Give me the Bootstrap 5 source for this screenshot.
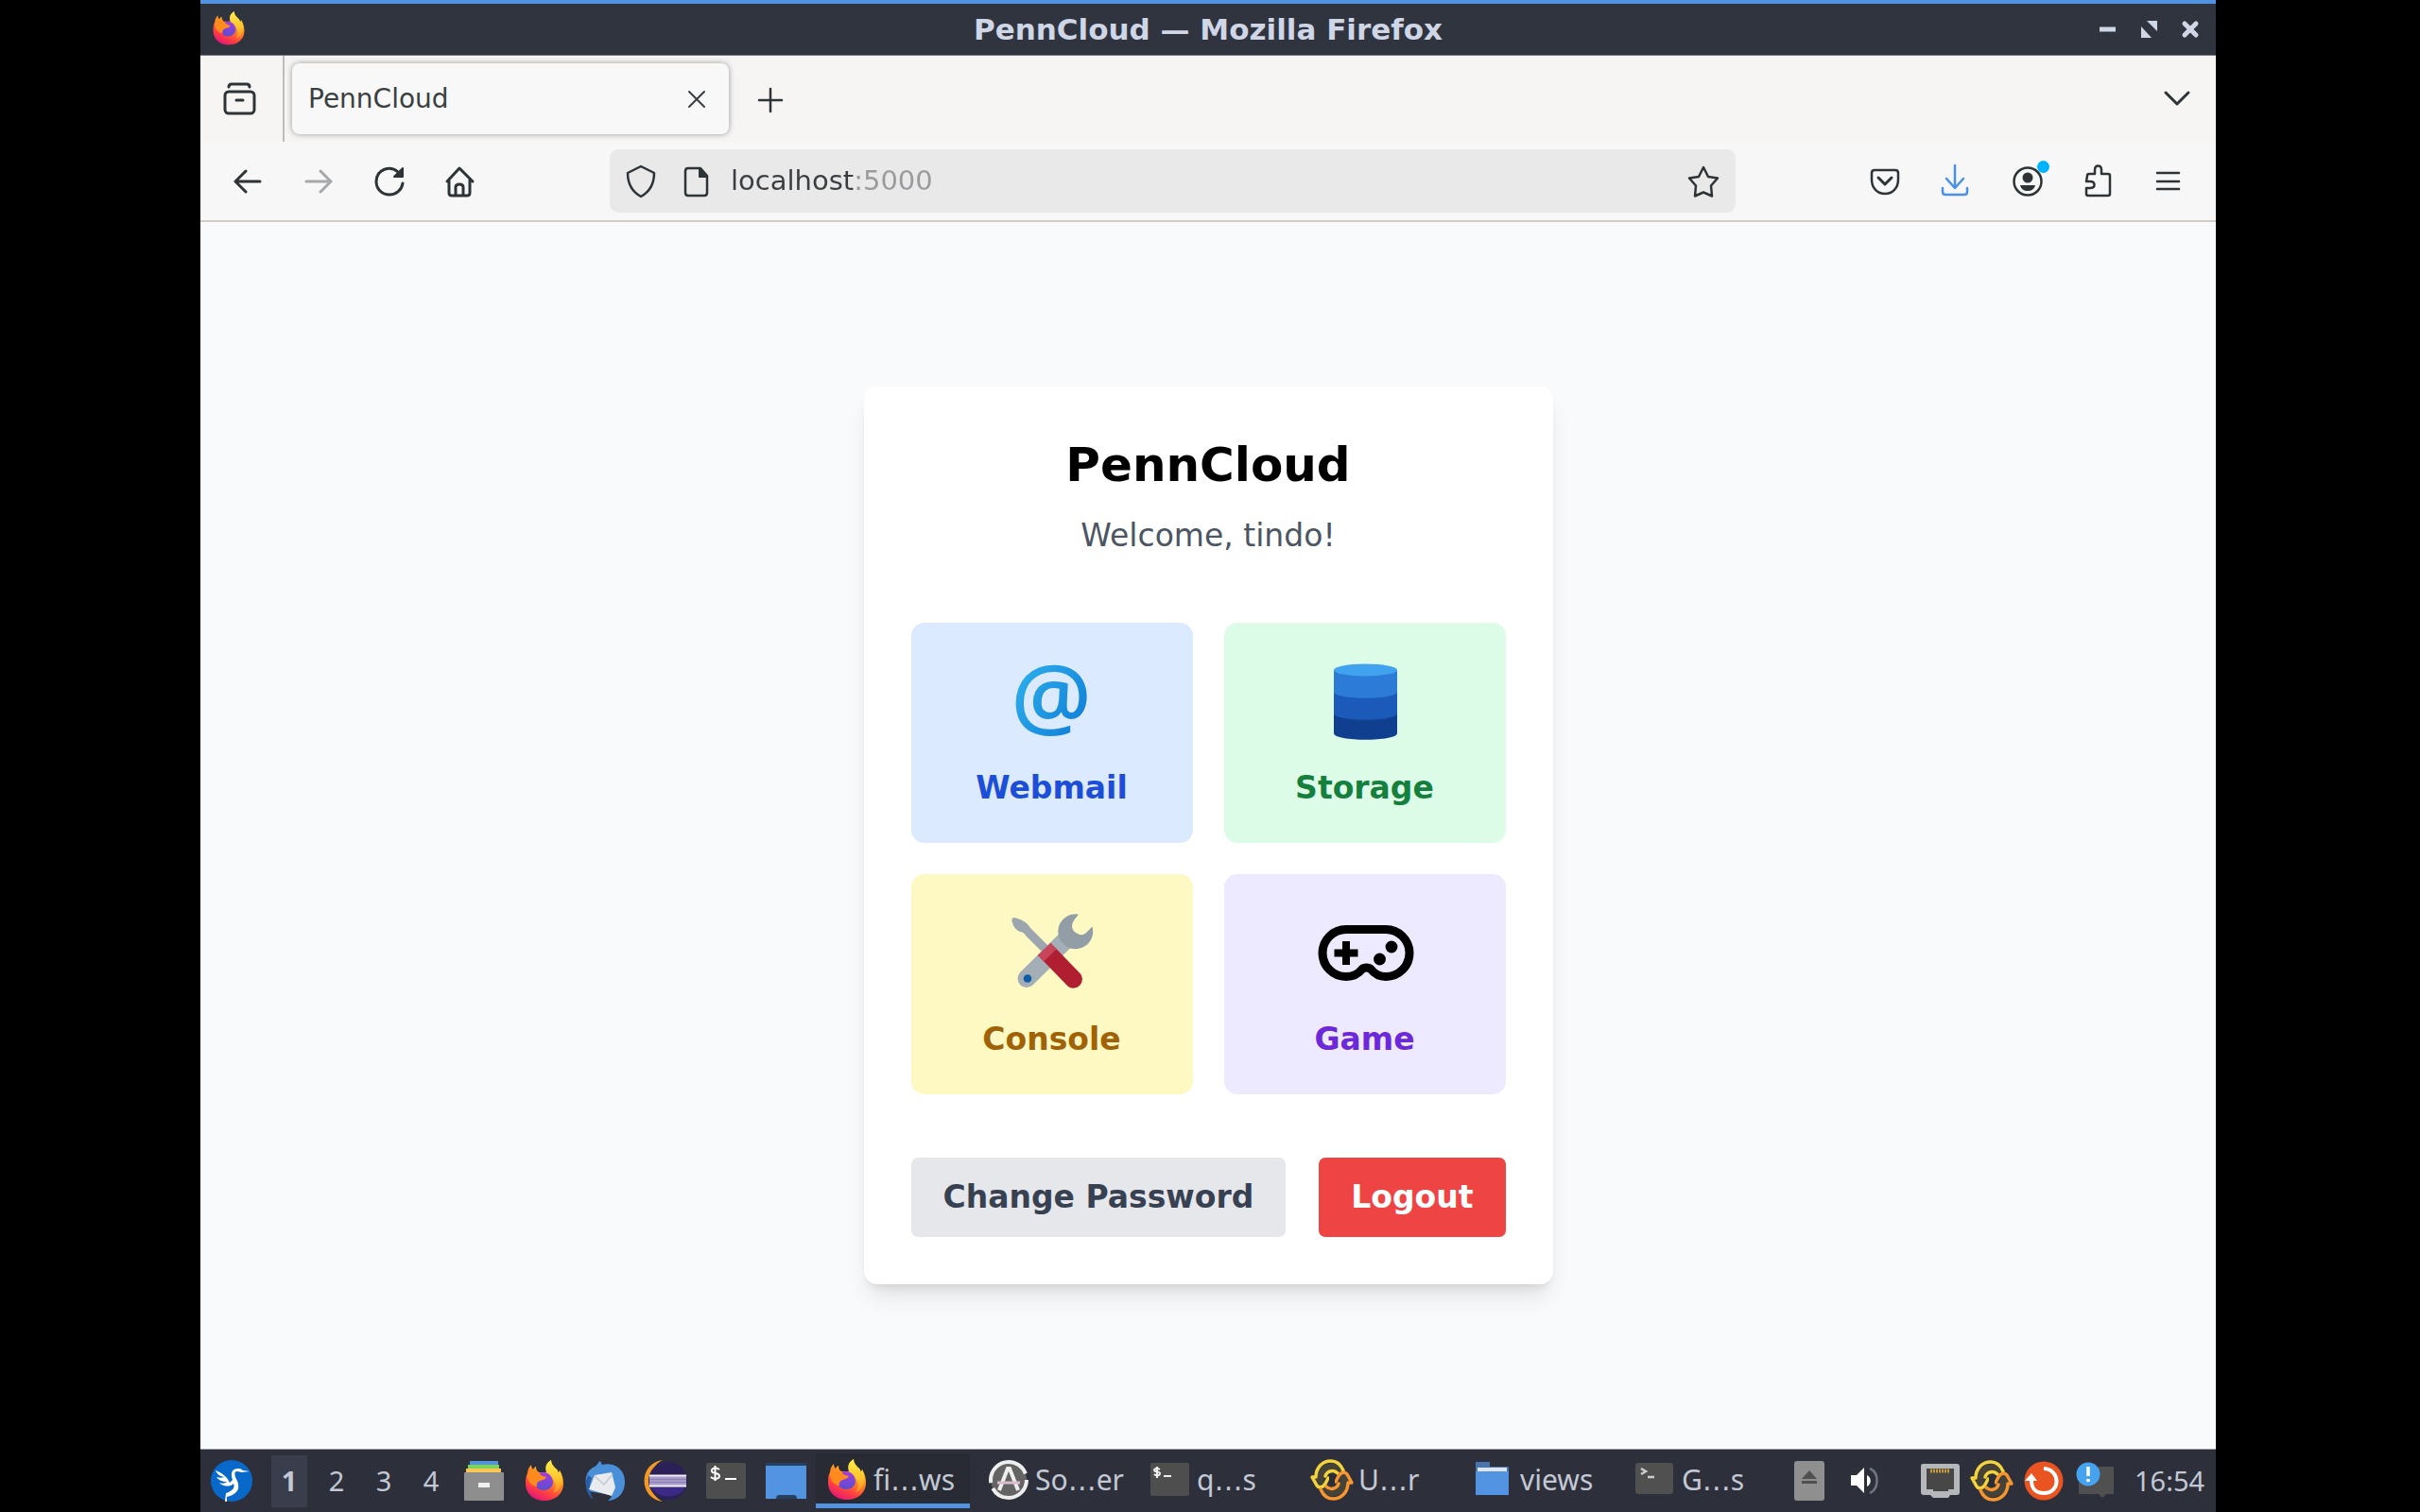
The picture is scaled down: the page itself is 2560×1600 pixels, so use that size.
<!DOCTYPE html>
<html lang="en">
<head>
<meta charset="utf-8">
<meta name="viewport" content="width=device-width, initial-scale=1">
<title>PennCloud</title>
<link rel="stylesheet" href="https://cdn.jsdelivr.net/npm/bootstrap@5.3.0/dist/css/bootstrap.min.css">
<style>
  body { background: #000; font-family: "DejaVu Sans", sans-serif; color: #2e3436; }
  .desktop { min-height: 100vh; margin: 0 216px 0 212px; }
  .ico { display: block; flex: none; width: 40px; height: 40px; fill: none; stroke: currentColor; stroke-width: 3; stroke-linecap: round; stroke-linejoin: round; }
  .plain { background: none; border: 0; padding: 0; color: inherit; display: block; flex: none; }

  /* window title bar */
  .titlebar { height: 59px; padding: 0 7px 0 7px; background: #2f343f; border-top: 4px solid #5294e2; border-bottom: 1px solid #77777b; color: #cfd6e6; }
  .titlebar h1 { font-size: 31px; line-height: 40px; font-weight: 700; }
  .title-side { width: 130px; }

  /* tab strip */
  .tabstrip { height: 91px; background: #f6f5f4; padding-right: 22px; }
  .tab-view { width: 89px; border-right: 2px solid #bfbdbb; padding-left: 21px; }
  .tab-item { width: 462px; height: 75px; margin-left: 8px; padding: 0 14px 0 17px; border-radius: 8px; background: #f8f8f8; box-shadow: 0 0 6px rgba(0,0,0,.38); font-size: 28px; color: #3a3f41; }

  /* navigation bar */
  .navstrip { height: 85px; padding: 0 30px; background: #f7f7f8; border-bottom: 2px solid #d4cac6; }
  .tool-group { gap: 35px; }
  .urlbox { margin: 0 138px; height: 67px; padding: 0 14px; border-radius: 9px; background: #e9e9ea; gap: 17px; }
  .urlbox input { border: 0; outline: 0; padding: 0; font-size: 29px; color: #2e3436; background: linear-gradient(90deg, #3a3e40 130px, #989a9b 130px); -webkit-background-clip: text; background-clip: text; -webkit-text-fill-color: transparent; }
  .dimmed { opacity: .4; }
  .dl { color: #4a90e8; }
  .notice-dot { position: absolute; top: -2px; right: -4px; width: 13px; height: 13px; border-radius: 50%; background: #00b3ff; }

  /* page */
  .viewport { background: #f9fafc; }
  .panel { width: 729px; padding: 50px; border-radius: 14px; background: #fff; box-shadow: 0 17px 25px -5px rgba(0,0,0,.1), 0 7px 10px -5px rgba(0,0,0,.1); }
  .panel h2 { font-size: 50px; line-height: 66px; font-weight: 700; color: #000; margin-bottom: 17px; }
  .panel p { font-size: 33px; line-height: 50px; color: #4b5563; margin-bottom: 67px; }
  .tiles { display: grid; grid-template-columns: 1fr 1fr; gap: 33px; margin-bottom: 67px; }
  .tile { padding: 33px; border-radius: 14px; font-size: 33px; line-height: 50px; font-weight: 700; text-decoration: none; }
  .tile svg { display: block; overflow: visible; width: 104px; height: 100px; margin: 0 auto 17px; }
  .tile-blue { background: #dbeafe; color: #1d4ed8; }
  .tile-green { background: #dcfce7; color: #15803d; }
  .tile-yellow { background: #fef9c3; color: #a16207; }
  .tile-violet { background: #ede9fe; color: #6d28d9; }
  .action { border: 0; border-radius: 7px; padding: 17px 34px; font-size: 33px; line-height: 50px; font-weight: 700; }
  .action-grey, .action-grey:hover { background: #e5e7eb; color: #374151; }
  .action-red, .action-red:hover { background: #ef4444; color: #fff; }

  /* desktop panel */
  .taskbar { height: 67px; padding: 0 6px 0 10px; background: #2d303b; border-top: 1px solid #a0a2a8; color: #c3c8d5; font-family: "Noto Sans", sans-serif; font-size: 30px; line-height: 40px; }
  .pic { display: block; flex: none; width: 46px; height: 46px; }
  .spaces { gap: 12px; margin: 0 14px 0 19px; }
  .space-btn { width: 38px; height: 55px; text-align: center; font-size: 29px; }
  .space-btn.current { background: #3a3d4b; font-weight: 700; }
  .launchers { gap: 18px; margin-right: 8px; }
  .tasks { gap: 8px; }
  .task { width: 163px; height: 58px; padding: 3px 0 0 10px; gap: 5px; border-bottom: 5px solid transparent !important; }
  .task.current { background: #282b34; border-color: #5294e2 !important; }
  .dots { font-family: "DejaVu Sans", sans-serif; }
  .tray { gap: 9px; }
  .clock { width: 80px; margin-left: 9px; font-size: 29px; }
</style>
</head>
<body>
<svg width="0" height="0" class="position-absolute" aria-hidden="true">
  <defs>
    <linearGradient id="ffBody" x1=".8" y1="0" x2=".3" y2="1"><stop offset="0" stop-color="#ffe23a"/><stop offset=".4" stop-color="#ff9a1f"/><stop offset=".75" stop-color="#ff4040"/><stop offset="1" stop-color="#e3157b"/></linearGradient>
    <linearGradient id="ffFlame" x1="0" y1="0" x2="0" y2="1"><stop offset="0" stop-color="#fff04a"/><stop offset=".6" stop-color="#ffc02b"/><stop offset="1" stop-color="#ff8a26"/></linearGradient>
    <linearGradient id="ffCore" x1="0" y1="0" x2="0" y2="1"><stop offset="0" stop-color="#a63ae0"/><stop offset="1" stop-color="#5a4fd0"/></linearGradient>
    <symbol id="firefox" viewBox="0 0 46 46">
      <path fill="url(#ffBody)" d="M5 15C5 11 7 8 9 6c0 3 1 4 2 5 1-2 2-3 3-3 0 3 1 5 3 6h9c-2-6 0-10 4-13 0 5 3 7 6 10 1 1 1 2 2 4l1-3c3 5 4 9 4 14 0 11-9 18-20 18S3 37 3 26c0-4 0-8 2-11z"/>
      <path fill="url(#ffFlame)" d="M25 14c-2-6 0-10 5-13 0 5 3 7 6 10 1 1 1 2 2 4l1-3c6 13 0 22-7 24 5-6 3-15-7-22z"/>
      <path fill="url(#ffCore)" d="M17 15c6-3 14 0 15 9 0 6-5 9-10 9-6 0-9-4-8-9l9-3-6-3z"/>
      <path fill="#ff8b1c" d="M5 15c3-4 8-3 13 0 0 2 3 3 7 4-1 3-5 3-7 4-2 1-4 3-3 6C9 29 4 22 5 15z"/>
    </symbol>
    <symbol id="cycle" viewBox="0 0 46 46">
      <circle cx="23" cy="23" r="13" fill="none" stroke="#454238" stroke-width="9"/>
      <g fill="none" stroke-width="3.500" stroke-linejoin="round" stroke-linecap="round">
        <g stroke="#f4d43c"><path d="M35 13C32 6 28 3 22 3 13 3 6 10 6 20H2l5 9c2 3 7 2 9-2l3-6"/><path d="M16 19c2-6 9-7 13-3"/></g>
        <g stroke="#f7952f"><path d="M11 33c3 7 7 10 13 10 9 0 16-7 16-17h4l-5-9c-2-3-7-2-9 2l-3 6"/><path d="M30 27c-2 6-9 7-13 3"/></g>
      </g>
      <rect x="20" y="18" width="6" height="10" fill="#2b2d35"/>
    </symbol>
  </defs>
</svg>

<main class="desktop d-flex flex-column">
  <header class="titlebar d-flex align-items-center">
    <div class="title-side"><svg class="pic" aria-hidden="true" viewBox="-5 -4 56 56"><use href="#firefox" width="46" height="46"/></svg></div>
    <h1 class="flex-grow-1 text-center m-0">PennCloud — Mozilla Firefox</h1>
    <div class="title-side d-flex justify-content-end gap-1">
      <button class="plain" aria-label="Minimize"><svg class="ico" viewBox="0 0 40 40"><path d="M12 20h17" stroke-width="5" stroke-linecap="butt"/></svg></button>
      <button class="plain" aria-label="Restore"><svg class="ico" viewBox="0 0 40 40"><g fill="currentColor" stroke="none"><path d="M18 11h11v11zM12 17l11 12H12z"/></g></svg></button>
      <button class="plain" aria-label="Close window"><svg class="ico" viewBox="0 0 40 40"><path d="M14 14l12 12M26 14L14 26" stroke-width="5"/></svg></button>
    </div>
  </header>

  <div class="tabstrip d-flex align-items-center">
    <div class="tab-view h-100 d-flex align-items-center">
      <button class="plain" aria-label="View recent browsing"><svg class="ico" viewBox="0 0 40 40"><path d="M9 7c0-2 1-3 3-3h16c2 0 3 1 3 3"/><rect x="5" y="12" width="31" height="23" rx="4"/><path d="M17 21h7"/></svg></button>
    </div>
    <div class="tab-item d-flex align-items-center justify-content-between">
      <span>PennCloud</span>
      <button class="plain" aria-label="Close tab"><svg class="ico" viewBox="0 0 40 40"><path d="M12 12l16 16M28 12L12 28" stroke-width="2"/></svg></button>
    </div>
    <button class="plain ms-4" aria-label="New tab"><svg class="ico" viewBox="0 0 40 40"><path d="M20 9v24M8 21h24" stroke-width="2.500"/></svg></button>
    <button class="plain ms-auto" aria-label="List all tabs"><svg class="ico" viewBox="0 0 40 40"><path d="M9 13l12 12 12-12"/></svg></button>
  </div>

  <nav class="navstrip d-flex align-items-center" aria-label="Browser">
    <div class="tool-group d-flex">
      <button class="plain" aria-label="Back"><svg class="ico" viewBox="0 0 40 40"><path d="M33 20H7M18 9L7 20l11 11"/></svg></button>
      <button class="plain dimmed" aria-label="Forward"><svg class="ico" viewBox="0 0 40 40"><path d="M7 20h26M22 9l11 11-11 11"/></svg></button>
      <button class="plain" aria-label="Reload"><svg class="ico" viewBox="0 0 40 40"><path d="M29 10C20 2 6 8 6 20c0 8 6 14 14 14 7 0 13-5 14-12"/><path d="M34 6v9h-9z" fill="currentColor" stroke-width="2"/></svg></button>
      <button class="plain" aria-label="Home"><svg class="ico" viewBox="0 0 40 40"><path d="M6 20L19 6l14 14M8 18v14q0 3 3 3h16q3 0 3-3V18M15 35V26q0-3 4-3t4 3v9"/></svg></button>
    </div>
    <div class="urlbox flex-grow-1 d-flex align-items-center">
      <svg class="ico" viewBox="0 0 40 40" aria-hidden="true"><path stroke-width="2.500" d="M19 4L33 11C33 22 28 31 19 36 10 31 5 22 5 11z"/></svg>
      <svg class="ico" viewBox="0 0 40 40" aria-hidden="true"><path d="M12 6h13l7 8v18q0 3-3 3H12q-3 0-3-3V9q0-3 3-3z" stroke-width="2.500"/><path d="M24 6v9h8z" fill="currentColor" stroke-width="2"/></svg>
      <input class="flex-grow-1" type="text" aria-label="Address" value="localhost:5000">
      <button class="plain" aria-label="Bookmark this page"><svg class="ico" viewBox="0 0 40 40"><path stroke-width="2.500" d="M20 5l5 10 10 1.500-7 8 1 11-9-4-9 4 1-11-7-8L15 15z"/></svg></button>
    </div>
    <div class="tool-group d-flex">
      <button class="plain" aria-label="Save to Pocket"><svg class="ico" viewBox="0 0 40 40"><path stroke-width="2.500" d="M9 8h22q3 0 3 3v7c0 9-6 15-14 15S6 27 6 18v-7q0-3 3-3z"/><path d="M13 16l7 7 7-7"/></svg></button>
      <button class="plain dl" aria-label="Downloads"><svg class="ico" viewBox="0 0 40 40"><path stroke-width="2.500" d="M19 3v24M10 17l9 10 9-10M6 27v4q0 3 3 3h20q3 0 3-3v-4"/></svg></button>
      <button class="plain position-relative" aria-label="Account"><svg class="ico" viewBox="0 0 40 40"><circle cx="21" cy="20" r="14.500" stroke-width="2.500"/><g fill="currentColor" stroke="none"><circle cx="21" cy="16" r="5.500"/><path d="M13 24h16c-1 4-4 6-8 6s-7-2-8-6z"/></g></svg><span class="notice-dot"></span></button>
      <button class="plain" aria-label="Extensions"><svg class="ico" viewBox="0 0 40 40"><path stroke-width="2.500" d="M9 14q0-2 2-2h6V8c0-6 7-6 7 0v4h7q2 0 2 2v19q0 2-2 2H10q-2 0-2-2v-6h4c6 0 6-7 0-7H8z"/></svg></button>
      <button class="plain" aria-label="Menu"><svg class="ico" viewBox="0 0 40 40"><path stroke-width="2.500" d="M8 11h23M8 20h23M8 28h23"/></svg></button>
    </div>
  </nav>

  <section class="viewport flex-grow-1 d-flex align-items-center justify-content-center">
    <div class="panel text-center">
      <h2>PennCloud</h2>
      <p>Welcome, tindo!</p>
      <div class="tiles">
        <a class="tile tile-blue" href="#webmail">
          <svg viewBox="0 0 104 100" aria-hidden="true">
            <defs><linearGradient id="atInk" x1="0" y1="0" x2="1" y2="1"><stop offset="0" stop-color="#35bdf0"/><stop offset="1" stop-color="#0a74d4"/></linearGradient></defs>
            <text x="51" y="79" text-anchor="middle" font-family="Open Sans" font-size="95" font-weight="600" fill="url(#atInk)">@</text>
          </svg>
          Webmail
        </a>
        <a class="tile tile-green" href="#storage">
          <svg viewBox="0 0 104 100" aria-hidden="true">
            <path fill="#103f8f" d="M19 62h67v22c0 9-67 9-67 0z"/>
            <path fill="#1b5ab9" d="M19 38h67v25c0 9-67 9-67 0z"/>
            <path fill="#2c7bd6" d="M19 17h67v23c0 9-67 9-67 0z"/>
            <ellipse cx="52.500" cy="17" rx="33.500" ry="6.500" fill="#41a3ef"/>
          </svg>
          Storage
        </a>
        <a class="tile tile-yellow" href="#console">
          <svg viewBox="0 0 104 100" aria-hidden="true">
            <path d="M25 77.500L64 39" stroke="#a3aeb7" stroke-width="19" stroke-linecap="round"/>
            <path fill="#929da6" d="M80 9.500A18.500 18.500 0 1 0 94.500 22.500L88 29q-4 4-9 1-6-3-6-8 0-3 2-6z"/>
            <path fill="#9ba6af" d="M12 13c-3 0-3 3-2 5 1 5 4 8 8 10 3 0 5 2 6 4l20 20 6-7-20-20c-2-2-3-4-5-6-4-3-8-5-13-6z"/>
            <path fill="#b01f31" d="M50.500 40L82 72.500A9.500 9.500 0 0 1 69 86L37 53z"/>
            <path fill="#c9465a" d="M50.500 40L37 53l6 6.500 13.500-13z"/>
            <circle cx="26" cy="77.500" r="4.300" fill="#0f5ca5"/>
          </svg>
          Console
        </a>
        <a class="tile tile-violet" href="#game">
          <svg viewBox="0 0 104 100" aria-hidden="true">
            <path d="M32 25.500H74A25 25 0 0 1 74 75.500c-7 0-12-3-16-8-2-2-7-2-9 0-4 5-10 8-17 8A25 25 0 0 1 32 25.500z" fill="none" stroke="#000" stroke-width="9" stroke-linejoin="round"/>
            <path d="M32 38v25M19.500 50.500h25" stroke="#000" stroke-width="8" fill="none"/>
            <circle cx="80" cy="44" r="6.400"/><circle cx="67.500" cy="57" r="6.400"/>
          </svg>
          Game
        </a>
      </div>
      <div class="d-flex justify-content-between">
        <button class="btn action action-grey">Change Password</button>
        <button class="btn action action-red">Logout</button>
      </div>
    </div>
  </section>

  <footer class="taskbar d-flex align-items-center">
    <button class="plain" aria-label="Applications"><svg class="pic" viewBox="0 0 46 46"><circle cx="23" cy="23" r="22" fill="#0869cb"/><path fill="#fff" d="M6 12c8 3 13 8 15 13l3-3c-2-5-2-12 6-12 2 0 4 1 5 2l7 1-8 1c-2 0-3-1-5-1-4 0-3 5 0 10 4 10-2 15-11 17v5h-2l1-9c6-2 10-5 8-10-4 4-12 3-15-1 3 1 6 1 8-1-5 0-9-2-11-5 4 1 6 1 8 0-5-1-8-4-9-7z"/></svg></button>
    <div class="spaces d-flex">
      <button class="plain space-btn current">1</button>
      <button class="plain space-btn">2</button>
      <button class="plain space-btn">3</button>
      <button class="plain space-btn">4</button>
    </div>
    <div class="launchers d-flex">
      <button class="plain" aria-label="Files"><svg class="pic" viewBox="0 0 46 46"><path fill="#5294d8" d="M8 2h30v6H8z"/><path fill="#7fd25a" d="M6 6h33v6H6z"/><path fill="#f7c657" d="M4 10h37v6H4z"/><rect x="2" y="14" width="42" height="30" rx="1" fill="#8e8e8e"/><rect x="17" y="25" width="12" height="5" fill="#f0f0f0"/></svg></button>
      <button class="plain" aria-label="Firefox"><svg class="pic"><use href="#firefox"/></svg></button>
      <button class="plain" aria-label="Thunderbird"><svg class="pic" viewBox="0 0 46 46"><path fill="#4a90d9" d="M12 8c2 0 3-4 6-6l2 4c12-3 24 4 24 18 0 14-10 20-18 20 3-2 4-4 4-6L5 34C0 22 3 12 12 8z"/><path fill="#2a5fa8" d="M5 17c-4 8-3 20 6 26C6 36 6 28 9 20z"/><path fill="#e9ebee" d="M12 17l18-3 4 16-4 9L6 32z"/><path d="M12 18l10 9 9-11" fill="none" stroke="#c2c8d0" stroke-width="1.500"/></svg></button>
      <button class="plain" aria-label="Eclipse"><svg class="pic" viewBox="0 0 46 46"><path fill="#f39a26" d="M20 1C-6 4-6 42 20 45 3 37 3 9 20 1z"/><circle cx="25.500" cy="23" r="20.500" fill="#2b2156"/><path fill="#3c2b86" d="M7 29h37c-5 14-30 14-37 0z"/><path fill="#a79cc8" d="M6 17h39v12H6z"/><path stroke="#f2effa" stroke-width="2" d="M6 17.500h39M6 28.500h39"/><path stroke="#8a7cb6" stroke-width="1" d="M6 21.500h39M6 24.500h39"/></svg></button>
      <button class="plain" aria-label="Terminal"><svg class="pic" viewBox="0 0 46 46"><rect x="2" y="4" width="42" height="38" rx="2" fill="#4e4e4e"/><path d="M16 11c-4-3-9-1-8 2 1 3 8 1 8 5 0 3-6 4-9 1M11.500 7v16M22 21h12" fill="none" stroke="#fff" stroke-width="2"/></svg></button>
      <button class="plain" aria-label="Show desktop"><svg class="pic" viewBox="0 0 46 46"><path fill="#26415f" d="M1 4h43v38H1z"/><path fill="#5294e2" d="M1 7h43v35H34q0-4-3-4H15q-3 0-3 4H1z"/></svg></button>
    </div>
    <div class="tasks d-flex">
      <button class="plain task current d-flex align-items-center"><svg class="pic"><use href="#firefox"/></svg><span>fi<span class="dots">…</span>ws</span></button>
      <button class="plain task d-flex align-items-center"><svg class="pic" viewBox="0 0 46 46"><circle cx="23" cy="23" r="19" fill="#646464" stroke="#eee" stroke-width="4" stroke-dasharray="50 6 56 7.400"/><path d="M13 34L22 11h2l9 23" fill="none" stroke="#eee" stroke-width="4"/><path d="M11 26h24" stroke="#dcbccc" stroke-width="3"/></svg><span>So<span class="dots">…</span>er</span></button>
      <button class="plain task d-flex align-items-center"><svg class="pic" viewBox="0 0 46 46"><rect x="2" y="5" width="41" height="35" rx="2" fill="#4e4e4e"/><path d="M12 12c-3-2-6-1-6 1 1 2 6 1 6 3 0 3-4 3-6 1M9 9v12M16 19h8" fill="none" stroke="#eee" stroke-width="2"/></svg><span>q<span class="dots">…</span>s</span></button>
      <button class="plain task d-flex align-items-center"><svg class="pic"><use href="#cycle"/></svg><span>U<span class="dots">…</span>r</span></button>
      <button class="plain task d-flex align-items-center"><svg class="pic" viewBox="0 0 46 46"><path fill="#4875b0" d="M4 4h15v5h20v10H4z"/><path fill="#dfe6f0" d="M6 10h31v6H6z"/><path fill="#5294e2" d="M4 14h35v25H4z"/></svg><span>views</span></button>
      <button class="plain task d-flex align-items-center"><svg class="pic" viewBox="0 0 46 46"><rect x="2" y="5" width="40" height="33" rx="3" fill="#505050"/><path d="M8 11l5 3-5 3M15 20h7" fill="none" stroke="#ccc" stroke-width="2.500"/></svg><span>G<span class="dots">…</span>s</span></button>
    </div>
    <div class="tray d-flex align-items-center ms-auto">
      <button class="plain me-1" aria-label="Eject"><svg class="pic" viewBox="0 0 46 46"><rect x="7" y="2" width="32" height="42" rx="3" fill="#8f8f8f"/><path fill="#505050" d="M23 12l8 9H15zM15 23h16v3H15z"/></svg></button>
      <button class="plain me-4" aria-label="Volume"><svg class="pic" viewBox="0 0 46 46"><path fill="#fff" d="M8 17h6l8-8v27l-8-8H8zM25 17c5 2 5 10 0 12z"/><path d="M28 10c10 4 10 21 0 26" fill="none" stroke="#70747e" stroke-width="2.500"/></svg></button>
      <button class="plain" aria-label="Network"><svg class="pic" viewBox="0 0 46 46"><path fill="#b5b7ba" d="M5 5h36q3 0 3 3v27q0 3-3 3h-7l-2 3H16l-3-3H6q-3 0-3-3V8q0-3 2-3z"/><path fill="#474747" d="M9 10h29v22h-6v2H16v-2H9z"/><path d="M13 12.500h21" stroke="#c79a3c" stroke-width="4" stroke-dasharray="2 1"/></svg></button>
      <button class="plain" aria-label="Sync"><svg class="pic"><use href="#cycle"/></svg></button>
      <button class="plain" aria-label="Updates"><svg class="pic" viewBox="0 0 46 46"><circle cx="23" cy="23" r="20.500" fill="#e95420"/><path d="M23 10c18 1 18 26 0 26-8 0-13-5-13-13" fill="none" stroke="#fff" stroke-width="4"/><path fill="#fff" d="M3 23l7-8 6 8z"/></svg></button>
      <button class="plain" aria-label="Notifications"><svg class="pic" viewBox="0 0 46 46"><path fill="#505050" d="M5 8h37v29H34l-4 4-4-4H5z"/><circle cx="15" cy="16" r="12.500" fill="#45a3f0"/><path d="M15 8v10M15 21v3" stroke="#fff" stroke-width="3.500"/></svg></button>
      <span class="clock">16:54</span>
    </div>
  </footer>
</main>
<script src="https://cdn.jsdelivr.net/npm/bootstrap@5.3.0/dist/js/bootstrap.bundle.min.js"></script>
</body>
</html>
